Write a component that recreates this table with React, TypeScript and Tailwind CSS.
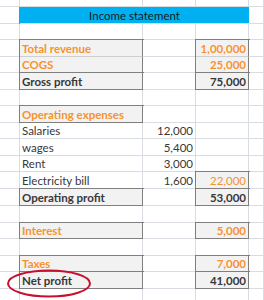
import React from 'react';

type CellSpec = {
    text?: string;
    kind?: 'plain' | 'box' | 'boxTop' | 'boxBottom';
    tone?: 'orange' | 'dark';
    bold?: boolean;
    right?: boolean;
};

type RowSpec = {
    h: string;
    header?: boolean;
    b?: CellSpec;
    c?: CellSpec;
    d?: CellSpec;
};

// cell skins: light gridline vs. dark bordered grey box
const SKIN: Record<string, string> = {
    plain: 'bg-white border-r border-b border-[#d9dce3]',
    box: 'bg-[#f2f2f2] border-r border-b border-[#7f7f7f] shadow-[0_0_0_1px_#7f7f7f]',
    boxTop: 'bg-[#f2f2f2] border-r border-b border-r-[#7f7f7f] border-b-[#cfcfcf] shadow-[0_0_0_1px_#7f7f7f]',
    boxBottom: 'bg-[#f2f2f2] border-r border-b border-[#7f7f7f] shadow-[-1px_0_0_0_#7f7f7f]',
};

const rows: RowSpec[] = [
    { h: 'h-[7px]' },
    { h: 'h-[17px]', header: true },
    { h: 'h-[16px]' },
    {
        h: 'h-[17px]',
        b: { text: 'Total revenue', kind: 'boxTop', tone: 'orange', bold: true },
        d: { text: '1,00,000', kind: 'boxTop', tone: 'orange', bold: true, right: true },
    },
    {
        h: 'h-[16px]',
        b: { text: 'COGS', kind: 'boxBottom', tone: 'orange', bold: true },
        d: { text: '25,000', kind: 'boxBottom', tone: 'orange', bold: true, right: true },
    },
    {
        h: 'h-[17px]',
        b: { text: 'Gross profit', kind: 'box', bold: true },
        d: { text: '75,000', kind: 'box', bold: true, right: true },
    },
    { h: 'h-[16px]' },
    { h: 'h-[17px]', b: { text: 'Operating expenses', kind: 'box', tone: 'orange', bold: true } },
    { h: 'h-[16px]', b: { text: 'Salaries' }, c: { text: '12,000', right: true } },
    { h: 'h-[17px]', b: { text: 'wages' }, c: { text: '5,400', right: true } },
    { h: 'h-[16px]', b: { text: 'Rent' }, c: { text: '3,000', right: true } },
    {
        h: 'h-[17px]',
        b: { text: 'Electricity bill' },
        c: { text: '1,600', right: true },
        d: { text: '22,000', kind: 'box', tone: 'orange', right: true },
    },
    {
        h: 'h-[17px]',
        b: { text: 'Operating profit', kind: 'box', bold: true },
        d: { text: '53,000', kind: 'box', bold: true, right: true },
    },
    { h: 'h-[17px]' },
    {
        h: 'h-[16px]',
        b: { text: 'Interest', kind: 'box', tone: 'orange', bold: true },
        d: { text: '5,000', kind: 'box', tone: 'orange', bold: true, right: true },
    },
    { h: 'h-[17px]' },
    {
        h: 'h-[16px]',
        b: { text: 'Taxes', kind: 'box', tone: 'orange', bold: true },
        d: { text: '7,000', kind: 'box', tone: 'orange', bold: true, right: true },
    },
    {
        h: 'h-[17px]',
        b: { text: 'Net profit', kind: 'box', bold: true },
        d: { text: '41,000', kind: 'box', bold: true, right: true },
    },
    { h: 'h-[17px]' },
];

const Cell: React.FC<{ spec?: CellSpec; h: string }> = ({ spec, h }) => {
    const s = spec || {};
    const skin = SKIN[s.kind || 'plain'];
    const color = s.tone === 'orange' ? 'text-[#f7922f]' : 'text-[#383838]';
    return (
        <div className={`${h} ${skin} flex items-end px-[2px] pb-[1px] overflow-visible whitespace-nowrap ${s.right ? 'justify-end' : 'justify-start'}`}>
            {s.text && (
                <span className={`text-[11.5px] leading-[13px] ${color} ${s.bold ? 'font-bold' : 'font-normal'}`}>{s.text}</span>
            )}
        </div>
    );
};

export default function App() {
    return (
        <div className="relative w-[264px] h-[300px] overflow-hidden bg-white font-['Lato',sans-serif]">
            <div className="grid grid-cols-[20px_123px_53px_53px_1fr]">
                {rows.map((r, i) => (
                    <React.Fragment key={i}>
                        <Cell h={r.h} />
                        {r.header ? (
                            <div className={`${r.h} col-span-3 bg-[#00b0f0] border-b border-[#d9dce3] shadow-[-1px_0_0_0_#00b0f0] flex items-end justify-center pb-[1px]`}>
                                <span className="text-[11.5px] leading-[13px] text-[#1a1a1a]">Income statement</span>
                            </div>
                        ) : (
                            <>
                                <Cell h={r.h} spec={r.b} />
                                <Cell h={r.h} spec={r.c} />
                                <Cell h={r.h} spec={r.d} />
                            </>
                        )}
                        <Cell h={r.h} />
                    </React.Fragment>
                ))}
            </div>

            {/* red highlight round "Net profit" */}
            <svg className="absolute left-0 top-0 pointer-events-none" width="264" height="300">
                <ellipse cx="49" cy="283.5" rx="41" ry="13" fill="none" stroke="#c8102e" strokeWidth="2" />
            </svg>
        </div>
    );
}
